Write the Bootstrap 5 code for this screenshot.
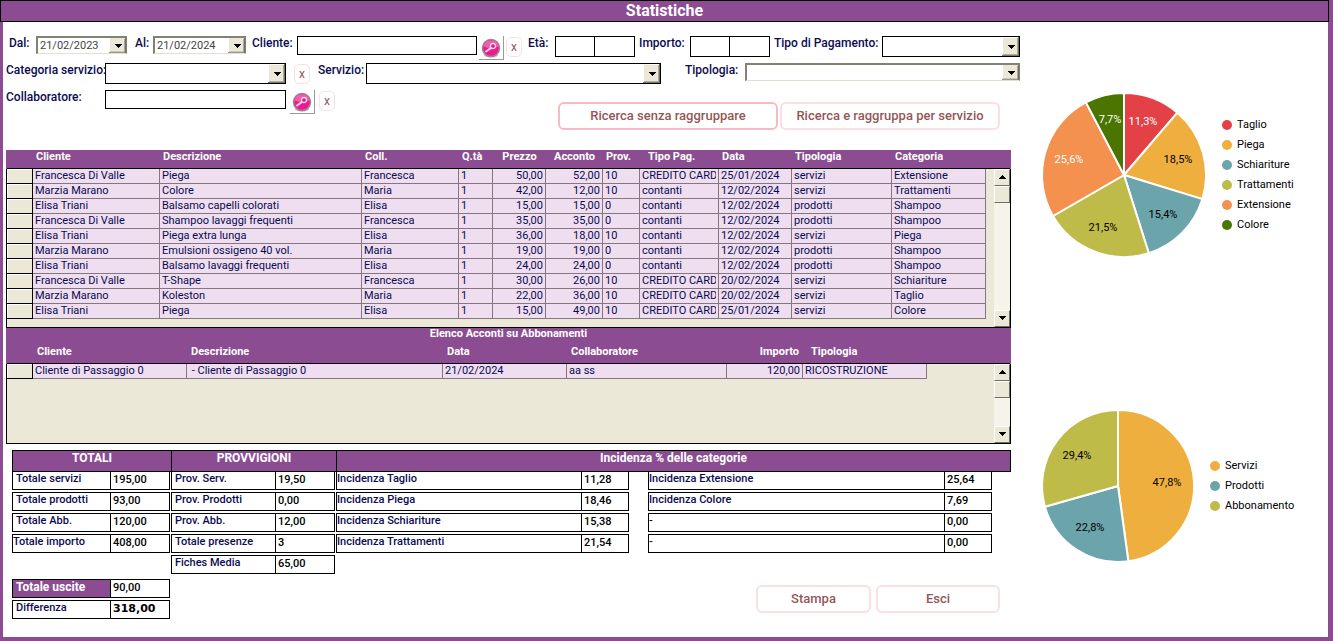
<!DOCTYPE html>
<html lang="it">
<head>
<meta charset="utf-8">
<meta name="viewport" content="width=device-width, initial-scale=1">
<title>Statistiche</title>
<link href="https://cdn.jsdelivr.net/npm/bootstrap@5.3.0/dist/css/bootstrap.min.css" rel="stylesheet">
<style>
  :root { --plum: #8b4c91; --lilac: #eedeef; --sand: #ebe8d8; --navy: #0b0b52; --rose: #965657; }
  body { font-family: Roboto, "Liberation Sans", sans-serif; font-size: 12px; line-height: 14px; color: var(--navy); background: #fff; }
  .app-frame { border: solid var(--plum); border-width: 0 5px 4px 3px; min-height: 100vh; }
  .app-title { background: var(--plum); border: 1px solid #000; margin: 0 -1px 0 -3px; height: 22px; font-size: 16px; line-height: 19px; font-weight: 700; color: #fff; }
  .work-area { padding: 14px 0 0 3px; min-width: 0; }
  .chart-area { width: 308px; padding: 71px 0 0 22px; }

  /* search form */
  .filter-row { height: 27px; }
  .filter-row label { font-weight: 500; white-space: nowrap; flex: none; }
  .w-dal { width: 30px; padding-left: 3px; } .w-al { width: 18px; } .w-cli { width: 45px; } .w-eta { width: 27px; } .w-imp { width: 51px; }
  .w-pag { width: 108px; } .w-main { width: 99px; } .w-serv { width: 48px; } .w-tip { width: 60px; }
  .lead-2 { margin-left: 2px; } .lead-6 { margin-left: 6px; }
  .field { border: 1px solid #000; border-radius: 0; background: #fff; padding: 0 4px; height: 19px; min-width: 0; color: var(--navy); }
  .field-main { width: 181px; flex: none; }
  .field-half { width: 40px; height: 21px; }
  .field-half + .field-half { width: 41px; margin-left: -1px; }
  .combo { appearance: none; height: 21px; background-color: #fff; background-repeat: no-repeat; background-position: right 4px center, right center; background-size: 7px 4px, 17px 100%;
    background-image: url("data:image/svg+xml,%3Csvg xmlns='http://www.w3.org/2000/svg' width='7' height='4' viewBox='0 0 7 4'%3E%3Cpath d='M0 0h7v1H6v1H5v1H4v1H3V3H2V2H1V1H0z'/%3E%3C/svg%3E"),
      url("data:image/svg+xml,%3Csvg xmlns='http://www.w3.org/2000/svg' width='17' height='20' viewBox='0 0 17 20' preserveAspectRatio='none'%3E%3Crect width='17' height='20' fill='%23716f64'/%3E%3Crect width='16' height='19' fill='%23fff'/%3E%3Crect x='1' y='1' width='15' height='18' fill='%23aca899'/%3E%3Crect x='1' y='1' width='14' height='17' fill='%23ebe8d8'/%3E%3C/svg%3E"); }
  .combo-sunk { border: solid #848074; border-width: 2px 1px 1px 2px; border-bottom-color: #e3e0d2; height: 18px; }
  .combo-date { color: #444; width: 91px; font-size: 11px; line-height: 14px; padding: 0 2px; }
  .w-date-b { width: 93px; }
  .w-pay { width: 138px; } .w-kind { width: 275px; }
  .find-btn { width: 25px; height: 24px; padding: 0; border: solid #9c9a94; border-width: 0 1px 1px 0; background: #fff; flex: none; }
  .find-btn svg { display: block; margin: 1px auto 0; }
  .clear-btn { width: 16px; height: 20px; margin-top: 1px; padding: 0; border: 1px solid #fadfe3; border-radius: 5px; background: #fff; color: var(--rose); line-height: 16px; flex: none; }
  .push-btn { --bs-btn-padding-y: 0; --bs-btn-padding-x: 0; --bs-btn-font-size: 13px; --bs-btn-font-weight: 500; --bs-btn-color: var(--rose); --bs-btn-border-color: #fadfe3; --bs-btn-border-radius: 6px; --bs-btn-bg: #fff; height: 28px; border-width: 2px; }
  .push-btn.is-default { --bs-btn-border-color: #f6bcc2; }
  .w-search { width: 220px; } .w-stampa { width: 115px; } .w-esci { width: 124px; }
  .search-actions { gap: 2px; margin-right: 20px; }

  /* record grids */
  .grid-box { margin-right: 9px; position: relative; border: 1px solid #000; border-top: 0; background: var(--sand); }
  .grid-main { margin-top: 20px; height: 178px; }
  .grid-sub { height: 116px; }
  .grid-title { background: var(--plum); color: #fff; font-size: 11px; font-weight: 700; line-height: 12px; height: 15px; text-align: center; }
  .records { table-layout: fixed; width: 100%; border-collapse: separate; border-spacing: 0; font-size: 11px; line-height: 14px; }
  .records th { background: var(--plum); color: #fff; font-weight: 700; height: 19px; padding: 0 3px 4px; border-bottom: 1px solid #000; white-space: nowrap; }
  .grid-sub .records th { height: 21px; padding: 0 4px 3px; }
  .grid-title, .records thead { box-shadow: -1px 0 var(--plum), 1px 0 var(--plum); }
  .records td { height: 15px; padding: 0 2px; background: var(--lilac); border: solid #85777f; border-width: 0 1px 1px 0; white-space: nowrap; overflow: clip; overflow-clip-margin: content-box; }
  .records td:first-child { background: var(--sand); border-color: #000; box-shadow: inset 1px 1px #fff; }
  .records td.filler { background: none; border: 0; }
  .records td.num { text-align: right; }
  .scroller { position: absolute; right: 0; bottom: 0; width: 16px; background: #f5f3ea; display: flex; flex-direction: column; }
  .grid-main .scroller { top: 19px; } .grid-sub .scroller { top: 36px; }
  .scroller span { display: block; height: 17px; background: var(--sand); border: 1px solid #fff; border-right-color: #716f64; border-bottom-color: #716f64; }
  .scroller svg { display: block; margin: 5px auto 0; }

  /* totals */
  .totals { margin: 6px 9px 0 6px; }
  .totals-a { width: 159px; } .totals-b { width: 165px; } .totals-c { min-width: 0; }
  .totals h2 { background: var(--plum); color: #fff; border: 1px solid #000; height: 22px; margin: 0; font-size: 12px; line-height: 14px; font-weight: 700; text-align: center; }
  .totals h2.joined { margin-right: -1px; }
  .pair-list { margin: 0; }
  .pair { display: flex; height: 19px; margin: 0 1px 2px 0; border: 1px solid #000; font-size: 11px; line-height: 14px; }
  h2 + .pair-list > .pair:first-child, .inc-split .pair:first-child { border-top: 0; height: 18px; }
  .pair dt { flex: 1; font-weight: 500; padding-left: 3px; white-space: nowrap; }
  .pair dd { margin: 0; padding: 1px 0 0 2px; border-left: 1px solid #000; color: #000; font-weight: 500; width: 59px; }
  .totals-c dd { width: 47px; }
  .totals-c dt { padding-left: 0; }
  .inc-split { display: grid; grid-template-columns: 293fr 344fr; column-gap: 19px; margin-right: 19px; }
  .inc-split .pair { margin-right: 0; }
  .pair.spent dt { background: var(--plum); color: #fff; font-weight: 700; font-size: 12px; }
  .pair.balance dd { font-family: "DejaVu Sans", sans-serif; font-weight: 700; }
  .outgo { margin-top: 26px; }
  .actions { margin: 30px 11px 20px 0; gap: 5px; }

  /* charts */
  .pie-block { display: flex; align-items: center; color: #000; font-size: 11px; }
  .pie-block svg { flex: none; overflow: visible; }
  .pie-block text { text-anchor: middle; }
  .slices { stroke: #fff; stroke-width: 2; stroke-linejoin: round; }
  .pie-second { margin-top: 153px; }
  .key-list { line-height: 20px; }
  .key-list li { display: flex; align-items: center; gap: 5px; }
  .dot { width: 10px; height: 10px; border-radius: 50%; }
  .c-red { fill: #e44146; background: #e44146; } .c-amber { fill: #efaf3e; background: #efaf3e; }
  .c-teal { fill: #6ca4ab; background: #6ca4ab; } .c-olive { fill: #bfbb49; background: #bfbb49; }
  .c-orange { fill: #f5914e; background: #f5914e; } .c-green { fill: #4b7500; background: #4b7500; }
</style>
<script src="https://cdn.jsdelivr.net/npm/bootstrap@5.3.0/dist/js/bootstrap.bundle.min.js"></script>
</head>
<body>
<svg class="d-none" aria-hidden="true">
  <symbol id="finder" viewBox="0 0 20 20">
    <ellipse cx="10" cy="16.500" rx="7" ry="2.500" fill="#b9b6bb"/>
    <circle cx="10" cy="9.500" r="8.500" fill="#f0188c" stroke="#9c8492" stroke-width="1.500"/>
    <path d="M2.500 8a7.700 7.700 0 0 1 15 0q-7 3-15 0z" fill="#f58cc4" opacity=".6"/>
    <circle cx="12" cy="7.500" r="2.500" fill="#e91484" stroke="#fbd5ea" stroke-width="1.300"/>
    <path d="M9.800 9.600L5 13" stroke="#fbd5ea" stroke-width="2" stroke-linecap="round"/>
  </symbol>
  <symbol id="up" viewBox="0 0 7 4"><path d="M3 0h1v1h1v1h1v1h1v1H0V3h1V2h1V1h1z"/></symbol>
  <symbol id="down" viewBox="0 0 7 4"><path d="M0 0h7v1H6v1H5v1H4v1H3V3H2V2H1V1H0z"/></symbol>
</svg>

<div class="app-frame d-flex flex-column">
  <h1 class="app-title text-center">Statistiche</h1>
  <div class="d-flex flex-grow-1">
    <main class="work-area flex-grow-1">
      <form>
        <div class="filter-row d-flex align-items-start">
          <label class="w-dal" for="dal">Dal:</label>
          <select class="field combo combo-sunk combo-date" id="dal"><option>21/02/2023</option></select>
          <label class="w-al ms-2" for="al">Al:</label>
          <select class="field combo combo-sunk combo-date w-date-b" id="al"><option>21/02/2024</option></select>
          <label class="w-cli lead-6" for="cliente">Cliente:</label>
          <input class="field flex-grow-1" id="cliente" type="text">
          <button class="find-btn lead-2" type="button" aria-label="Cerca cliente"><svg width="20" height="21"><use href="#finder"/></svg></button>
          <button class="clear-btn lead-2" type="button">x</button>
          <label class="w-eta lead-6" for="eta1">Età:</label>
          <input class="field field-half" id="eta1" type="text"><input class="field field-half" type="text" aria-label="Età massima">
          <label class="w-imp ms-1" for="imp1">Importo:</label>
          <input class="field field-half" id="imp1" type="text"><input class="field field-half" type="text" aria-label="Importo massimo">
          <label class="w-pag ms-1" for="pag">Tipo di Pagamento:</label>
          <select class="field combo w-pay" id="pag"><option></option></select>
        </div>
        <div class="filter-row d-flex align-items-start">
          <label class="w-main" for="cat">Categoria servizio:</label>
          <select class="field combo field-main" id="cat"><option></option></select>
          <button class="clear-btn mx-2" type="button">x</button>
          <label class="w-serv" for="serv">Servizio:</label>
          <select class="field combo flex-grow-1 me-4" id="serv"><option></option></select>
          <label class="w-tip" for="tipo">Tipologia:</label>
          <select class="field combo combo-sunk w-kind" id="tipo"><option></option></select>
        </div>
        <div class="d-flex align-items-start">
          <label class="w-main fw-medium" for="coll" style="font-weight:500">Collaboratore:</label>
          <input class="field field-main" id="coll" type="text">
          <button class="find-btn mx-1" type="button" aria-label="Cerca collaboratore"><svg width="20" height="21"><use href="#finder"/></svg></button>
          <button class="clear-btn" type="button">x</button>
          <div class="search-actions d-flex ms-auto mt-2 pt-1">
            <button class="btn push-btn is-default w-search" type="button">Ricerca senza raggruppare</button>
            <button class="btn push-btn w-search" type="button">Ricerca e raggruppa per servizio</button>
          </div>
        </div>
      </form>

      <section class="grid-box grid-main">
        <table class="records">
          <colgroup><col width="26"><col width="127"><col><col width="97"><col width="34"><col width="53"><col width="57"><col width="37"><col width="79"><col width="73"><col width="100"><col width="94"><col width="24"></colgroup>
          <thead><tr><th></th><th>Cliente</th><th>Descrizione</th><th>Coll.</th><th>Q.tà</th><th class="text-center">Prezzo</th><th class="text-center">Acconto</th><th>Prov.</th><th class="ps-2">Tipo Pag.</th><th>Data</th><th>Tipologia</th><th>Categoria</th><th></th></tr></thead>
          <tbody>
            <tr><td></td><td>Francesca Di Valle</td><td>Piega</td><td>Francesca</td><td>1</td><td class="num">50,00</td><td class="num">52,00</td><td>10</td><td>CREDITO CARD</td><td>25/01/2024</td><td>servizi</td><td>Extensione</td><td class="filler"></td></tr>
            <tr><td></td><td>Marzia Marano</td><td>Colore</td><td>Maria</td><td>1</td><td class="num">42,00</td><td class="num">12,00</td><td>10</td><td>contanti</td><td>12/02/2024</td><td>servizi</td><td>Trattamenti</td><td class="filler"></td></tr>
            <tr><td></td><td>Elisa Triani</td><td>Balsamo capelli colorati</td><td>Elisa</td><td>1</td><td class="num">15,00</td><td class="num">15,00</td><td>0</td><td>contanti</td><td>12/02/2024</td><td>prodotti</td><td>Shampoo</td><td class="filler"></td></tr>
            <tr><td></td><td>Francesca Di Valle</td><td>Shampoo lavaggi frequenti</td><td>Francesca</td><td>1</td><td class="num">35,00</td><td class="num">35,00</td><td>0</td><td>contanti</td><td>12/02/2024</td><td>prodotti</td><td>Shampoo</td><td class="filler"></td></tr>
            <tr><td></td><td>Elisa Triani</td><td>Piega extra lunga</td><td>Elisa</td><td>1</td><td class="num">36,00</td><td class="num">18,00</td><td>10</td><td>contanti</td><td>12/02/2024</td><td>servizi</td><td>Piega</td><td class="filler"></td></tr>
            <tr><td></td><td>Marzia Marano</td><td>Emulsioni ossigeno 40 vol.</td><td>Maria</td><td>1</td><td class="num">19,00</td><td class="num">19,00</td><td>0</td><td>contanti</td><td>12/02/2024</td><td>prodotti</td><td>Shampoo</td><td class="filler"></td></tr>
            <tr><td></td><td>Elisa Triani</td><td>Balsamo lavaggi frequenti</td><td>Elisa</td><td>1</td><td class="num">24,00</td><td class="num">24,00</td><td>0</td><td>contanti</td><td>12/02/2024</td><td>prodotti</td><td>Shampoo</td><td class="filler"></td></tr>
            <tr><td></td><td>Francesca Di Valle</td><td>T-Shape</td><td>Francesca</td><td>1</td><td class="num">30,00</td><td class="num">26,00</td><td>10</td><td>CREDITO CARD</td><td>20/02/2024</td><td>servizi</td><td>Schiariture</td><td class="filler"></td></tr>
            <tr><td></td><td>Marzia Marano</td><td>Koleston</td><td>Maria</td><td>1</td><td class="num">22,00</td><td class="num">36,00</td><td>10</td><td>CREDITO CARD</td><td>20/02/2024</td><td>servizi</td><td>Taglio</td><td class="filler"></td></tr>
            <tr><td></td><td>Elisa Triani</td><td>Piega</td><td>Elisa</td><td>1</td><td class="num">15,00</td><td class="num">49,00</td><td>10</td><td>CREDITO CARD</td><td>25/01/2024</td><td>servizi</td><td>Colore</td><td class="filler"></td></tr>
          </tbody>
        </table>
        <div class="scroller" aria-hidden="true"><span><svg width="7" height="4"><use href="#up"/></svg></span><span></span><span class="mt-auto"><svg width="7" height="4"><use href="#down"/></svg></span></div>
      </section>

      <section class="grid-box grid-sub">
        <div class="grid-title">Elenco Acconti su Abbonamenti</div>
        <table class="records">
          <colgroup><col width="26"><col width="154"><col><col width="124"><col width="160"><col width="76"><col width="124"><col width="83"></colgroup>
          <thead><tr><th></th><th>Cliente</th><th>Descrizione</th><th>Data</th><th>Collaboratore</th><th class="text-end">Importo</th><th class="ps-2">Tipologia</th><th></th></tr></thead>
          <tbody><tr><td></td><td>Cliente di Passaggio 0</td><td>&nbsp;- Cliente di Passaggio 0</td><td>21/02/2024</td><td>aa ss</td><td class="num">120,00</td><td>RICOSTRUZIONE</td><td class="filler"></td></tr></tbody>
        </table>
        <div class="scroller" aria-hidden="true"><span><svg width="7" height="4"><use href="#up"/></svg></span><span></span><span class="mt-auto"><svg width="7" height="4"><use href="#down"/></svg></span></div>
      </section>

      <div class="totals d-flex align-items-start">
        <section class="totals-a">
          <h2 class="joined">TOTALI</h2>
          <dl class="pair-list">
            <div class="pair"><dt>Totale servizi</dt><dd>195,00</dd></div>
            <div class="pair"><dt>Totale prodotti</dt><dd>93,00</dd></div>
            <div class="pair"><dt>Totale Abb.</dt><dd>120,00</dd></div>
            <div class="pair"><dt class="ps-0">Totale importo</dt><dd>408,00</dd></div>
          </dl>
          <dl class="pair-list outgo">
            <div class="pair spent"><dt>Totale uscite</dt><dd>90,00</dd></div>
            <div class="pair balance"><dt>Differenza</dt><dd>318,00</dd></div>
          </dl>
        </section>
        <section class="totals-b">
          <h2 class="joined">PROVVIGIONI</h2>
          <dl class="pair-list">
            <div class="pair"><dt>Prov. Serv.</dt><dd>19,50</dd></div>
            <div class="pair"><dt>Prov. Prodotti</dt><dd>0,00</dd></div>
            <div class="pair"><dt>Prov. Abb.</dt><dd>12,00</dd></div>
            <div class="pair"><dt>Totale presenze</dt><dd>3</dd></div>
            <div class="pair"><dt>Fiches Media</dt><dd>65,00</dd></div>
          </dl>
        </section>
        <section class="totals-c flex-grow-1">
          <h2>Incidenza % delle categorie</h2>
          <div class="inc-split">
            <dl class="pair-list">
              <div class="pair"><dt>Incidenza Taglio</dt><dd>11,28</dd></div>
              <div class="pair"><dt>Incidenza Piega</dt><dd>18,46</dd></div>
              <div class="pair"><dt>Incidenza Schiariture</dt><dd>15,38</dd></div>
              <div class="pair"><dt>Incidenza Trattamenti</dt><dd>21,54</dd></div>
            </dl>
            <dl class="pair-list">
              <div class="pair"><dt>Incidenza Extensione</dt><dd>25,64</dd></div>
              <div class="pair"><dt>Incidenza Colore</dt><dd>7,69</dd></div>
              <div class="pair"><dt>-</dt><dd>0,00</dd></div>
              <div class="pair"><dt>-</dt><dd>0,00</dd></div>
            </dl>
          </div>
          <div class="actions d-flex justify-content-end">
            <button class="btn push-btn w-stampa" type="button">Stampa</button>
            <button class="btn push-btn w-esci" type="button">Esci</button>
          </div>
        </section>
      </div>
    </main>

    <aside class="chart-area flex-shrink-0">
      <figure class="pie-block mb-0">
        <svg width="164" height="164" viewBox="0 0 164 164" role="img" aria-label="Incidenza delle categorie">
          <g class="slices">
            <path class="c-red" d="M82 82V0A82 82 0 0 1 135.400 19.700z"/>
            <path class="c-amber" d="M82 82L135.400 19.700A82 82 0 0 1 160.400 106.100z"/>
            <path class="c-teal" d="M82 82L160.400 106.100A82 82 0 0 1 106.800 160.200z"/>
            <path class="c-olive" d="M82 82L106.800 160.200A82 82 0 0 1 11 123z"/>
            <path class="c-orange" d="M82 82L11 123A82 82 0 0 1 43.900 9.400z"/>
            <path class="c-green" d="M82 82L43.900 9.400A82 82 0 0 1 82 0z"/>
          </g>
          <g fill="#fff"><text x="101" y="32">11,3%</text><text x="27" y="70">25,6%</text><text x="68" y="30">7,7%</text></g>
          <text x="136" y="70">18,5%</text><text x="121" y="125">15,4%</text><text x="61" y="138">21,5%</text>
        </svg>
        <ul class="key-list list-unstyled mb-0 ms-3">
          <li><span class="dot c-red"></span>Taglio</li>
          <li><span class="dot c-amber"></span>Piega</li>
          <li><span class="dot c-teal"></span>Schiariture</li>
          <li><span class="dot c-olive"></span>Trattamenti</li>
          <li><span class="dot c-orange"></span>Extensione</li>
          <li><span class="dot c-green"></span>Colore</li>
        </ul>
      </figure>
      <figure class="pie-block pie-second mb-0">
        <svg width="152" height="152" viewBox="0 0 152 152" role="img" aria-label="Servizi, prodotti e abbonamenti">
          <g class="slices">
            <path class="c-amber" d="M76 76V0A76 76 0 0 1 86.400 151.300z"/>
            <path class="c-teal" d="M76 76L86.400 151.300A76 76 0 0 1 2.900 96.700z"/>
            <path class="c-olive" d="M76 76L2.900 96.700A76 76 0 0 1 76 0z"/>
          </g>
          <text x="125" y="76">47,8%</text><text x="48" y="121">22,8%</text><text x="35" y="49">29,4%</text>
        </svg>
        <ul class="key-list list-unstyled mb-0 ms-3">
          <li><span class="dot c-amber"></span>Servizi</li>
          <li><span class="dot c-teal"></span>Prodotti</li>
          <li><span class="dot c-olive"></span>Abbonamento</li>
        </ul>
      </figure>
    </aside>
  </div>
</div>
</body>
</html>
